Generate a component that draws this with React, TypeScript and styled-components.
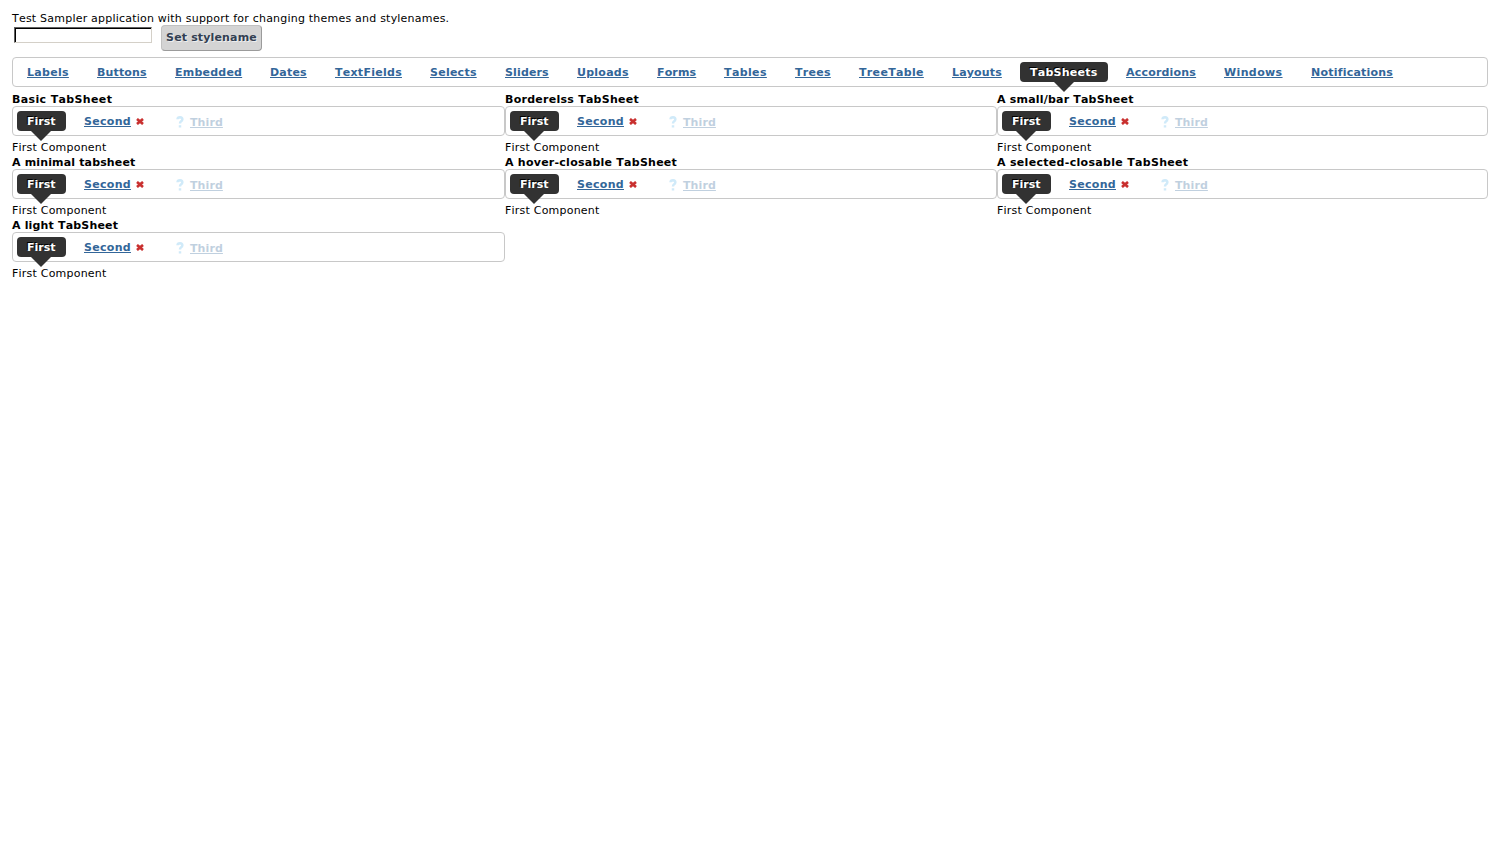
import React from 'react';
import styled, { createGlobalStyle, css } from 'styled-components';

const GlobalStyle = createGlobalStyle`
  * { box-sizing: border-box; }
  body {
    margin: 0;
    background: #fff;
    color: #000;
    font: 11px/15px "DejaVu Sans", sans-serif;
    font-kerning: none;
    letter-spacing: 0.215px;
  }
`;

const Page = styled.main`
  padding: 11px 12px 0;
`;

const Intro = styled.div`
  height: 14px;
  white-space: nowrap;
`;

const Toolbar = styled.div`
  display: flex;
  align-items: flex-start;
  height: 32px;
  padding-left: 2px;
`;

const StyleInput = styled.input`
  width: 138px;
  height: 16px;
  margin: 2px 9px 0 0;
  padding: 1px 1px 0 2px;
  border: 1px solid #d4d0c8;
  border-top-color: #606060;
  border-left-color: #606060;
  border-radius: 0;
  box-shadow: inset 1px 1px 0 #000;
  outline: none;
  font: inherit;
`;

const StyleButton = styled.button`
  width: 101px;
  height: 26px;
  padding: 0 0 2px;
  border: 1px solid #c1c1c1;
  border-right-color: #9b9b9b;
  border-bottom-color: #9b9b9b;
  border-radius: 4px;
  background: #d4d4d4;
  color: #323f52;
  font: bold 11px/15px "DejaVu Sans", sans-serif;
  font-kerning: none;
  letter-spacing: 0.15px;
  text-shadow: 1px 1px 0 #eee;
  white-space: nowrap;
`;

const Bar = styled.nav`
  display: flex;
  gap: 8px;
  height: 30px;
  padding: 4px;
  border: 1px solid #c8c8c8;
  border-radius: 4px;
`;

const Tab = styled.div<{ $selected?: boolean; $disabled?: boolean }>`
  position: relative;
  display: flex;
  height: 20px;
  padding: 3px 10px 0;
  border-radius: 4px;
  color: #369;
  font-weight: bold;
  white-space: nowrap;
  ${p => p.$disabled && css`opacity: 0.3;`}
  ${p => p.$selected && css`
    background: #323232;
    color: #fff;
    text-shadow: -1px -1px 0 #000;
    &::after {
      content: "";
      position: absolute;
      left: 50%;
      top: 20px;
      margin-left: -10.5px;
      border: 10px solid transparent;
      border-top-color: #323232;
      border-bottom: 0;
    }
  `}
`;

const TabText = styled.span<{ $plain?: boolean; $low?: boolean; $width: number; $spacing?: number }>`
  width: ${p => p.$width}px;
  padding-top: ${p => (p.$low ? 1 : 0)}px;
  letter-spacing: ${p => p.$spacing ?? 0}px;
  text-decoration: ${p => (p.$plain ? 'none' : 'underline')};
`;

const CloseIcon = styled.svg`
  width: 8px;
  height: 7px;
  margin: 4px 3px 0 5px;
`;

const HelpIcon = styled.svg`
  width: 8px;
  height: 12px;
  margin: 2px 6px 0 1px;
`;

const Grid = styled.section`
  display: grid;
  grid-template-columns: 493px 492px 491px;
  padding-top: 5px;
`;

const Cell = styled.article`
  height: 63px;
`;

const Caption = styled.h2<{ $spacing: number }>`
  height: 14px;
  margin: 0;
  font-size: 11px;
  line-height: 15px;
  letter-spacing: ${p => p.$spacing}px;
`;

const Content = styled.div`
  padding-top: 4px;
`;

// label, text width, letter spacing
const sections: [string, number, number][] = [
  ['Labels', 42, 0.3], ['Buttons', 50, 0.15], ['Embedded', 67, 0.22], ['Dates', 37, 0.2],
  ['TextFields', 67, 0.27], ['Selects', 47, 0.25], ['Sliders', 44, 0.15], ['Uploads', 52, 0.25],
  ['Forms', 39, 0.15], ['Tables', 43, 0.38], ['Trees', 36, 0.28], ['TreeTable', 65, 0.33],
  ['Layouts', 50, 0.15], ['TabSheets', 68, 0.25], ['Accordions', 70, 0.2], ['Windows', 59, 0.38],
  ['Notifications', 82, 0.22],
];

const sheets: [string, number][] = [
  ['Basic TabSheet', 0.36], ['Borderelss TabSheet', 0.26], ['A small/bar TabSheet', 0.2],
  ['A minimal tabsheet', 0.15], ['A hover-closable TabSheet', 0.25],
  ['A selected-closable TabSheet', 0.31], ['A light TabSheet', 0.17],
];

function TabSheet({ caption, spacing }: { caption: string; spacing: number }) {
  return (
    <Cell>
      <Caption $spacing={spacing}>{caption}</Caption>
      <Bar>
        <Tab $selected><TabText $plain $width={29}>First</TabText></Tab>
        <Tab>
          <TabText $width={47} $spacing={0.3}>Second</TabText>
          <CloseIcon viewBox="0 0 8 7">
            <path d="M1 1L7 6M7 1L1 6" stroke="#c9302f" strokeWidth="2.7" />
          </CloseIcon>
        </Tab>
        <Tab $disabled>
          <HelpIcon viewBox="0 0 8 12">
            <path d="M1.5 3.2Q1.6 1.3 4 1.3Q6.4 1.4 6.4 3.4Q6.3 4.7 4.9 5.5Q4 6.1 4 7.6M4 9.2V11.4" fill="none" stroke="#65bbec" strokeWidth="2.4" />
          </HelpIcon>
          <TabText $low $width={33} $spacing={0.1}>Third</TabText>
        </Tab>
      </Bar>
      <Content>First Component</Content>
    </Cell>
  );
}

export default function App() {
  return (
    <>
      <GlobalStyle />
      <Page>
        <Intro>Test Sampler application with support for changing themes and stylenames.</Intro>
        <Toolbar>
          <StyleInput aria-label="Stylename" />
          <StyleButton>Set stylename</StyleButton>
        </Toolbar>
        <Bar>
          {sections.map(([name, width, spacing]) => (
            <Tab key={name} $selected={name === 'TabSheets'}>
              <TabText $plain={name === 'TabSheets'} $width={width} $spacing={spacing}>{name}</TabText>
            </Tab>
          ))}
        </Bar>
        <Grid>
          {sheets.map(([caption, spacing]) => <TabSheet key={caption} caption={caption} spacing={spacing} />)}
        </Grid>
      </Page>
    </>
  );
}
